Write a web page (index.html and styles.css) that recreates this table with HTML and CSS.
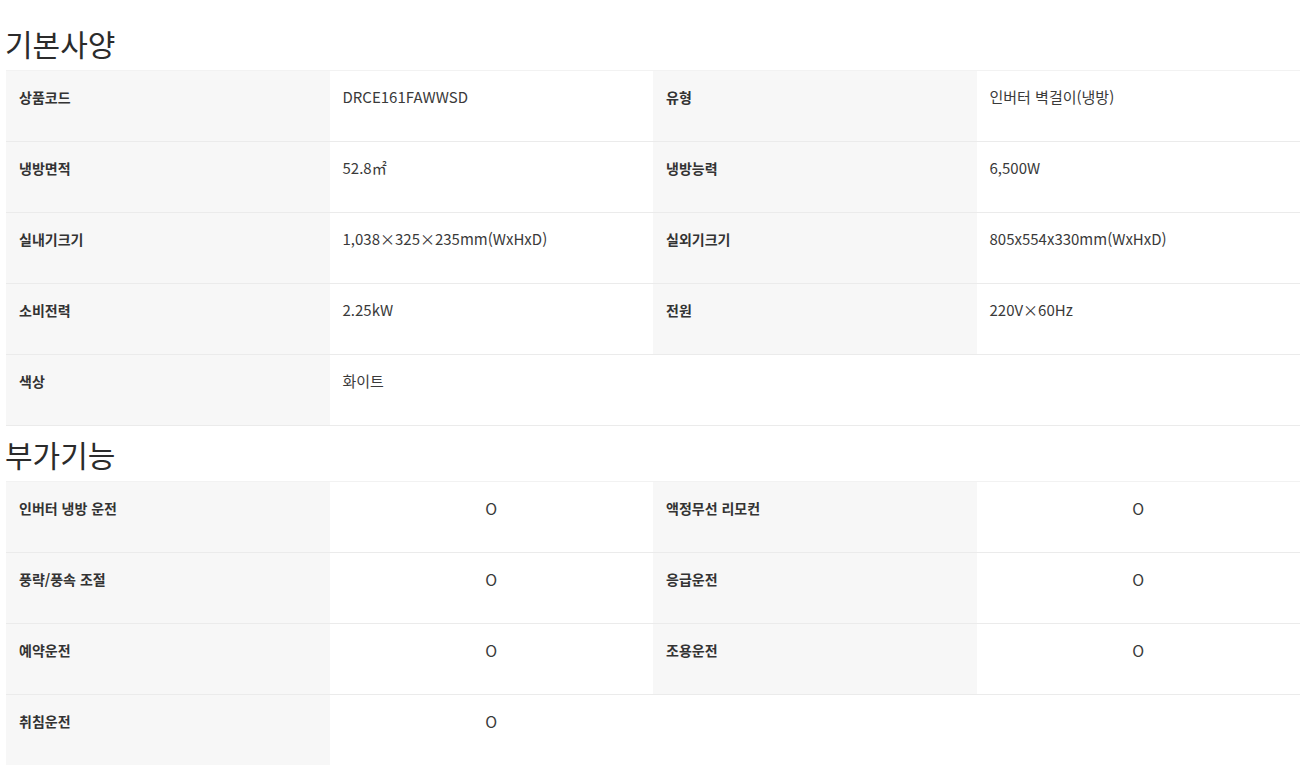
FILE: index.html
```html
<!DOCTYPE html>
<html lang="ko">
<head>
<meta charset="utf-8">
<title>제품 사양</title>
<link rel="stylesheet" href="styles.css">
</head>
<body>
<div class="page">
  <h2 class="sec-title first">기본사양</h2>
  <div class="spec">
    <div class="cell label">상품코드</div>
    <div class="cell value">DRCE161FAWWSD</div>
    <div class="cell label">유형</div>
    <div class="cell value">인버터 벽걸이(냉방)</div>

    <div class="cell label">냉방면적</div>
    <div class="cell value">52.8㎡</div>
    <div class="cell label">냉방능력</div>
    <div class="cell value">6,500W</div>

    <div class="cell label">실내기크기</div>
    <div class="cell value">1,038×325×235mm(WxHxD)</div>
    <div class="cell label">실외기크기</div>
    <div class="cell value">805x554x330mm(WxHxD)</div>

    <div class="cell label">소비전력</div>
    <div class="cell value">2.25kW</div>
    <div class="cell label">전원</div>
    <div class="cell value">220V×60Hz</div>

    <div class="cell label">색상</div>
    <div class="cell value">화이트</div>
    <div class="cell empty"></div>
    <div class="cell empty"></div>
  </div>

  <h2 class="sec-title">부가기능</h2>
  <div class="spec feature">
    <div class="cell label">인버터 냉방 운전</div>
    <div class="cell value mark">O</div>
    <div class="cell label">액정무선 리모컨</div>
    <div class="cell value mark">O</div>

    <div class="cell label">풍략/풍속 조절</div>
    <div class="cell value mark">O</div>
    <div class="cell label">응급운전</div>
    <div class="cell value mark">O</div>

    <div class="cell label">예약운전</div>
    <div class="cell value mark">O</div>
    <div class="cell label">조용운전</div>
    <div class="cell value mark">O</div>

    <div class="cell label">취침운전</div>
    <div class="cell value mark">O</div>
  </div>
</div>
</body>
</html>
```

FILE: styles.css
```css
* {
  box-sizing: border-box;
}

html, body {
  margin: 0;
  padding: 0;
  background: #ffffff;
}

body {
  font-family: "Noto Sans CJK KR", "Noto Sans", sans-serif;
  color: #333333;
}

.page {
  padding: 15px 0 0 6px;
  width: 1300px;
}

.sec-title {
  margin: 0 0 0 -1px;
  height: 55px;
  line-height: 56px;
  font-size: 30px;
  font-weight: 400;
  color: #2b2b2b;
}

.spec {
  display: grid;
  grid-template-columns: repeat(4, 1fr);
  border-top: 1px solid #f2f2f2;
}

.cell {
  height: 71px;
  padding: 15px 13px 0 13px;
  line-height: 22px;
  border-bottom: 1px solid #ebebeb;
  font-size: 15px;
}

.label {
  background: #f7f7f7;
  font-size: 14px;
  font-weight: 700;
  color: #333333;
}

.value {
  background: #ffffff;
  color: #3a3a3a;
  font-weight: 400;
}

.mark {
  text-align: center;
  padding-left: 0;
  padding-right: 0;
  font-size: 16px;
}

.empty {
  background: #ffffff;
}
```
